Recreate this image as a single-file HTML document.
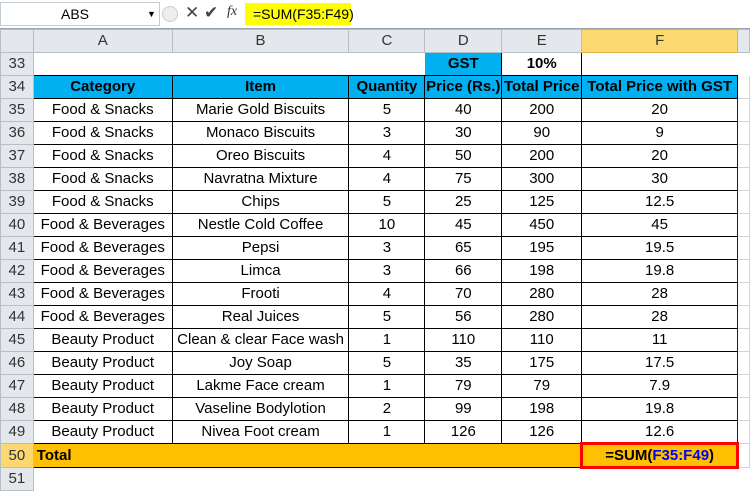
<!DOCTYPE html><html><head><style>
body{margin:0;width:750px;height:489px;overflow:hidden;background:#fff;font-family:"Liberation Sans",sans-serif;position:relative}
.fb{position:absolute;left:0;top:0;width:750px;height:28px;background:#fff;border-bottom:1px solid #9aa3ad}
.a{position:absolute}
table{position:absolute;left:0;top:29px;border-collapse:collapse;table-layout:fixed}
tr{height:23px}
td{height:21px;line-height:20px;padding:0;font-size:15px;text-align:center;white-space:nowrap;overflow:hidden;border:1px solid #d4d4d4}
tr.h td{background:#e4e7ec;border-color:#b9bec6;color:#333;font-size:15px;height:21px}
td.r{background:#e4e7ec;border-color:#b9bec6;color:#333;font-size:15px}
.k{border:1px solid #000}
.bl{background:#00b0f0;font-weight:bold}
.or{background:#ffc000}
.n{border-color:#fff}
</style></head><body>
<div class="fb"></div>
<div class="a" style="left:0;top:2px;width:158px;height:22px;border:1px solid #c6ccd3;font-size:14px;line-height:22px"><span style="position:absolute;left:60px">ABS</span><span style="position:absolute;left:146px;font-size:9px">▼</span></div>
<div class="a" style="left:162px;top:6px;width:14px;height:14px;border-radius:50%;border:1px solid #ccc;background:#eee"></div>
<div class="a" style="left:185px;top:3px;font-size:17px;color:#444">✕</div>
<div class="a" style="left:204px;top:3px;font-size:17px;color:#444">✔</div>
<div class="a" style="left:227px;top:4px;font-size:14px;font-style:italic;font-family:'Liberation Serif',serif;color:#333">fx</div>
<div class="a" style="left:245px;top:3px;width:106px;height:22px;background:#ffff00;font-size:14px;line-height:22px;padding-left:8px;box-sizing:border-box">=SUM(F35:F49)</div>
<table>
<colgroup><col style="width:33px"><col style="width:139px"><col style="width:177px"><col style="width:76px"><col style="width:77px"><col style="width:80px"><col style="width:156px"><col style="width:12px"></colgroup>
<tr class="h"><td style="background:#e4e7ec"></td><td>A</td><td>B</td><td>C</td><td>D</td><td>E</td><td style="background:#fcd970;border-color:#e0b040">F</td><td></td></tr>
<tr><td class="r">33</td><td class="n" style="border-bottom-color:#000"></td><td class="n" style="border-bottom-color:#000"></td><td class="n" style="border-bottom-color:#000"></td><td class="k bl">GST</td><td class="k" style="font-weight:bold">10%</td><td class="n" style="border-left:1px solid #000;border-bottom-color:#000"></td><td class="n"></td></tr>
<tr><td class="r">34</td><td class="k bl">Category</td><td class="k bl">Item</td><td class="k bl">Quantity</td><td class="k bl">Price (Rs.)</td><td class="k bl">Total Price</td><td class="k bl">Total Price with GST</td><td></td></tr>
<tr><td class="r">35</td><td class="k">Food &amp; Snacks</td><td class="k">Marie Gold Biscuits</td><td class="k">5</td><td class="k">40</td><td class="k">200</td><td class="k" style="border-left-color:#00f;border-right-color:#00f">20</td><td></td></tr>
<tr><td class="r">36</td><td class="k">Food &amp; Snacks</td><td class="k">Monaco Biscuits</td><td class="k">3</td><td class="k">30</td><td class="k">90</td><td class="k" style="border-left-color:#00f;border-right-color:#00f">9</td><td></td></tr>
<tr><td class="r">37</td><td class="k">Food &amp; Snacks</td><td class="k">Oreo Biscuits</td><td class="k">4</td><td class="k">50</td><td class="k">200</td><td class="k" style="border-left-color:#00f;border-right-color:#00f">20</td><td></td></tr>
<tr><td class="r">38</td><td class="k">Food &amp; Snacks</td><td class="k">Navratna Mixture</td><td class="k">4</td><td class="k">75</td><td class="k">300</td><td class="k" style="border-left-color:#00f;border-right-color:#00f">30</td><td></td></tr>
<tr><td class="r">39</td><td class="k">Food &amp; Snacks</td><td class="k">Chips</td><td class="k">5</td><td class="k">25</td><td class="k">125</td><td class="k" style="border-left-color:#00f;border-right-color:#00f">12.5</td><td></td></tr>
<tr><td class="r">40</td><td class="k">Food &amp; Beverages</td><td class="k">Nestle Cold Coffee</td><td class="k">10</td><td class="k">45</td><td class="k">450</td><td class="k" style="border-left-color:#00f;border-right-color:#00f">45</td><td></td></tr>
<tr><td class="r">41</td><td class="k">Food &amp; Beverages</td><td class="k">Pepsi</td><td class="k">3</td><td class="k">65</td><td class="k">195</td><td class="k" style="border-left-color:#00f;border-right-color:#00f">19.5</td><td></td></tr>
<tr><td class="r">42</td><td class="k">Food &amp; Beverages</td><td class="k">Limca</td><td class="k">3</td><td class="k">66</td><td class="k">198</td><td class="k" style="border-left-color:#00f;border-right-color:#00f">19.8</td><td></td></tr>
<tr><td class="r">43</td><td class="k">Food &amp; Beverages</td><td class="k">Frooti</td><td class="k">4</td><td class="k">70</td><td class="k">280</td><td class="k" style="border-left-color:#00f;border-right-color:#00f">28</td><td></td></tr>
<tr><td class="r">44</td><td class="k">Food &amp; Beverages</td><td class="k">Real Juices</td><td class="k">5</td><td class="k">56</td><td class="k">280</td><td class="k" style="border-left-color:#00f;border-right-color:#00f">28</td><td></td></tr>
<tr><td class="r">45</td><td class="k">Beauty Product</td><td class="k">Clean &amp; clear Face wash</td><td class="k">1</td><td class="k">110</td><td class="k">110</td><td class="k" style="border-left-color:#00f;border-right-color:#00f">11</td><td></td></tr>
<tr><td class="r">46</td><td class="k">Beauty Product</td><td class="k">Joy Soap</td><td class="k">5</td><td class="k">35</td><td class="k">175</td><td class="k" style="border-left-color:#00f;border-right-color:#00f">17.5</td><td></td></tr>
<tr><td class="r">47</td><td class="k">Beauty Product</td><td class="k">Lakme Face cream</td><td class="k">1</td><td class="k">79</td><td class="k">79</td><td class="k" style="border-left-color:#00f;border-right-color:#00f">7.9</td><td></td></tr>
<tr><td class="r">48</td><td class="k">Beauty Product</td><td class="k">Vaseline Bodylotion</td><td class="k">2</td><td class="k">99</td><td class="k">198</td><td class="k" style="border-left-color:#00f;border-right-color:#00f">19.8</td><td></td></tr>
<tr><td class="r">49</td><td class="k">Beauty Product</td><td class="k">Nivea Foot cream</td><td class="k">1</td><td class="k">126</td><td class="k">126</td><td class="k" style="border-left-color:#00f;border-right-color:#00f">12.6</td><td></td></tr>
<tr><td class="r" style="background:#fcd970">50</td><td class="or" colspan="5" style="text-align:left;font-weight:bold;padding-left:3px;border:1px solid #000;border-right:none">Total</td><td class="or" style="border:3px solid #f00;font-weight:bold">=SUM(<span style="color:#00f">F35:F49</span>)</td><td></td></tr>
<tr><td class="r">51</td><td class="n"></td><td class="n"></td><td class="n"></td><td class="n"></td><td class="n"></td><td class="n"></td><td class="n"></td></tr>
</table>
</body></html>
